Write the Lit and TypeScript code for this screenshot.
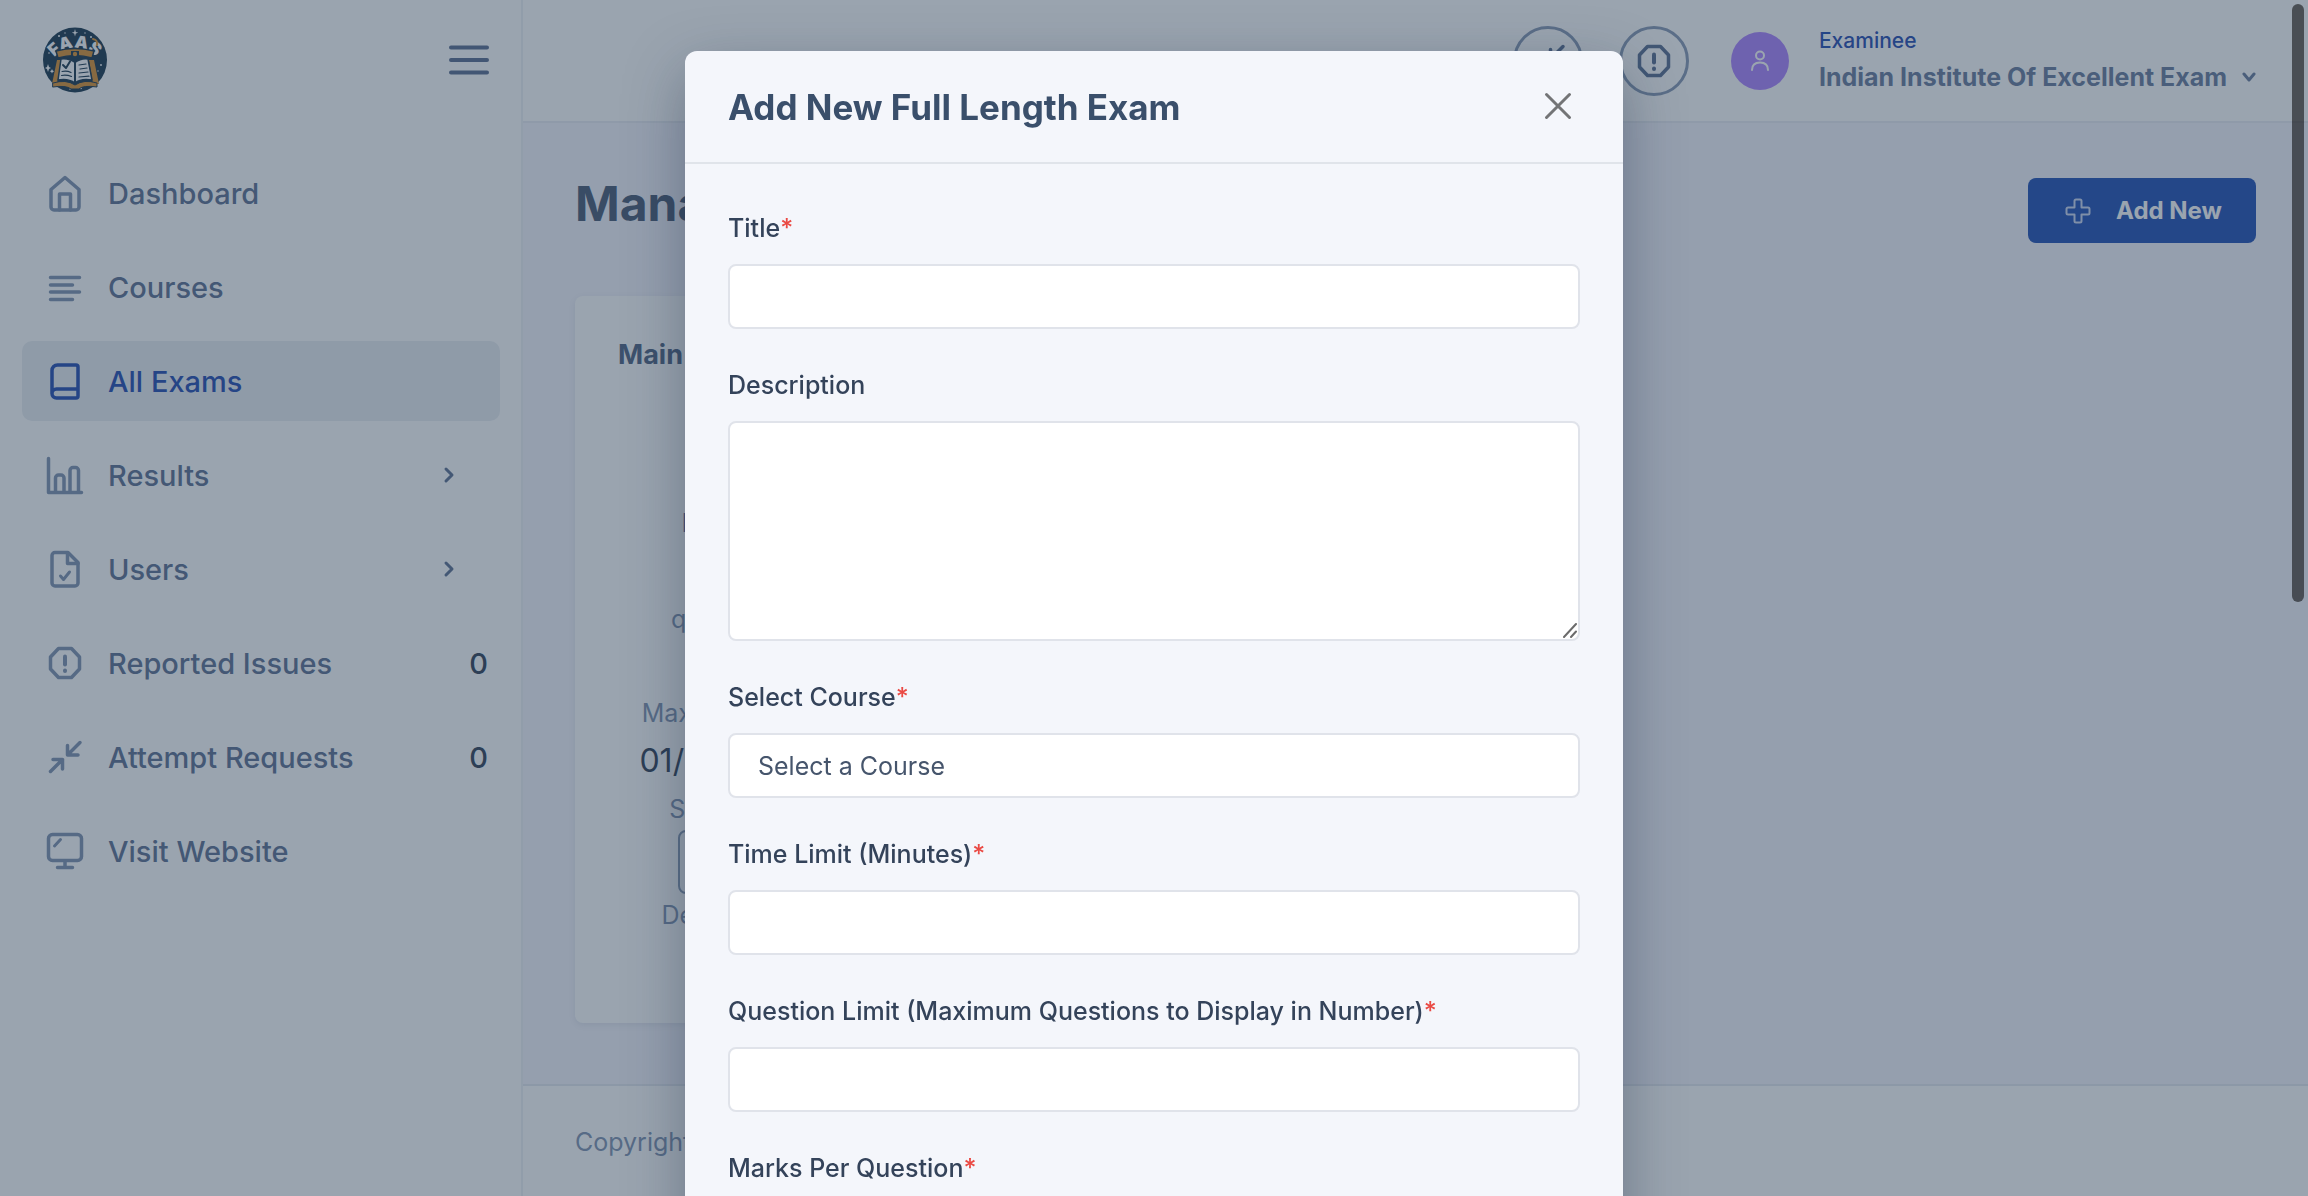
import { LitElement, html, css, svg, TemplateResult } from "lit";
import { customElement } from "lit/decorators.js";
import { classMap } from "lit/directives/class-map.js";

const icon = (body: TemplateResult) => html`<svg class="icon" viewBox="0 0 40 40" aria-hidden="true">${body}</svg>`;

const octagon = svg`<path d="M13.5 5.5h13l8 8.500v12l-8 8.500h-13l-8-8.500v-12z"/><path d="M20 13.500v8" stroke-width="4"/><path d="M20 27.500v.5" stroke-width="4"/>`;
const inward = svg`<path d="M35 5.500L23 17.500M22.500 8.500v9.500h10.500"/><path d="M5.500 34.500l12-12M8 22.500h9.500v9.500"/>`;

const icons: Record<string, TemplateResult> = {
  home: svg`<path d="M20 4.500L6 16.500v17.500a3 3 0 0 0 3 3h22a3 3 0 0 0 3-3V16.500z"/><path d="M14.500 37V21h11v16"/>`,
  lines: svg`<path d="M5.500 10.500h29M5.500 18h22M5.500 25h29M5.500 32.500h22"/>`,
  book: svg`<path d="M33 28H11.500a4.500 4.500 0 0 0 0 9H31a2 2 0 0 0 2-2V6a2 2 0 0 0-2-2H12.500A5.500 5.500 0 0 0 7 9.500v23"/>`,
  chart: svg`<path d="M3.500 3.500V37.500H36.500"/><path d="M10.500 37V23a3 3 0 0 1 3-3h2.500a3 3 0 0 1 3 3v14"/><path d="M25 37V15.500a3 3 0 0 1 3-3h2.500a3 3 0 0 1 3 3V37"/>`,
  file: svg`<path d="M10 3.500h13l10 10V34a3 3 0 0 1-3 3H10a3 3 0 0 1-3-3V6.500a3 3 0 0 1 3-3z"/><path d="M22.500 4v10.500H33"/><path d="M15.500 27l3 3.500 6-7.500" stroke-width="3"/>`,
  octagon,
  inward,
  monitor: svg`<rect x="3.500" y="3.500" width="33" height="26" rx="4"/><path d="M20 30v6M12.500 36.500h15"/><path d="M9.500 15l6-6.500" stroke-width="3"/>`,
};

interface NavItem { label: string; icon: string; active?: boolean; arrow?: boolean; count?: number }
const nav: NavItem[] = [
  { label: "Dashboard", icon: "home" },
  { label: "Courses", icon: "lines" },
  { label: "All Exams", icon: "book", active: true },
  { label: "Results", icon: "chart", arrow: true },
  { label: "Users", icon: "file", arrow: true },
  { label: "Reported Issues", icon: "octagon", count: 0 },
  { label: "Attempt Requests", icon: "inward", count: 0 },
  { label: "Visit Website", icon: "monitor" },
];

interface Field { id: string; label: string; kind: "text" | "area" | "select"; required?: boolean }
const fields: Field[] = [
  { id: "title", label: "Title", kind: "text", required: true },
  { id: "description", label: "Description", kind: "area" },
  { id: "course", label: "Select Course", kind: "select", required: true },
  { id: "time", label: "Time Limit (Minutes)", kind: "text", required: true },
  { id: "limit", label: "Question Limit (Maximum Questions to Display in Number)", kind: "text", required: true },
  { id: "marks", label: "Marks Per Question", kind: "text", required: true },
];

const base = css`
  * { box-sizing: border-box; }
  button, input, select, textarea { font: inherit; color: inherit; margin: 0; }
  button { border: 0; background: none; padding: 0; cursor: pointer; }
  a { color: inherit; text-decoration: none; }
  svg { display: block; flex: none; fill: none; stroke: currentColor; stroke-width: 3.5; stroke-linecap: round; stroke-linejoin: round; }
  .icon { width: 40px; height: 40px; }
`;

@customElement("side-nav")
export class SideNav extends LitElement {
  static styles = [base, css`
    :host { display: block; background: #fff; border-right: 2px solid #edf0f5; padding: 0 21px 0 22px; }
    .top { display: flex; align-items: center; justify-content: space-between; height: 119px; padding: 0 10px 0 21px; }
    .logo { width: 64px; height: 66px; stroke: none; overflow: visible; }
    .logo text { font: 900 17px Inter, sans-serif; fill: #fff; }
    .menu { color: #4f6388; }
    .menu svg { width: 42px; height: 36px; stroke-width: 4; }
    .list { display: flex; flex-direction: column; gap: 14px; margin: 34px 0 0; padding: 0; list-style: none; }
    .item { display: flex; align-items: center; gap: 23px; height: 80px; padding: 0 12px 0 23px; border-radius: 10px; color: #52668a; font-size: 29px; font-weight: 500; }
    .item .icon { color: #768baa; }
    .active, .item.active .icon { color: #1440ac; }
    .active { background: #e9edf1; }
    .label { flex: 1; }
    .arrow { width: 16px; height: 20px; margin-right: 31px; stroke-width: 3; }
    .count { color: #24344c; }
  `];
  render() {
    return html`
      <div class="top">
        <a href="#" aria-label="Home">
          <svg class="logo" viewBox="0 0 64 66">
            <ellipse cx="32" cy="33" rx="32" ry="32.500" fill="#0b2a42"/>
            <path d="M32 2l.8 3 2.500.8-2.500.8-.8 3-.8-3-2.500-.8 2.500-.8zM5 37l1 3 2 1-2 1-1 3-1-3-2-1 2-1zM9 42l.7 1.500 1.500.7-1.500.7L9 46.500l-.7-1.600-1.500-.7 1.500-.7z" fill="#fff"/>
            <g fill="#fff"><circle cx="16" cy="9" r="1"/><circle cx="22" cy="6" r=".7"/><circle cx="48" cy="10" r="1"/><circle cx="42" cy="6" r=".7"/><circle cx="6" cy="26" r=".8"/><circle cx="58" cy="38" r=".9"/><circle cx="55" cy="44" r=".7"/><circle cx="27" cy="62" r=".8"/><circle cx="38" cy="61.500" r=".8"/></g>
            <path id="arc" d="M8 35C15 24 23 21 32 21S49 24 56 35"/>
            <text text-anchor="middle"><textPath href="#arc" startOffset="50%">FAAS</textPath></text>
            <path d="M50 12q5 1 4 6" stroke="#d98b24" stroke-width="2"/>
            <path d="M15 31l-2-7q19-5 38 0l-2 7q-17-5-34 0z" fill="#d98b24" stroke="#0b2a42" stroke-width="1.500"/>
            <path d="M28 24h8v6l-4 6-4-6z" fill="#0b2a42"/><circle cx="32" cy="27" r="2.200" fill="#d98b24"/>
            <path d="M14 33h4l-4 24h-5zM46 33h5l5 24h-6z" fill="#d98b24"/>
            <path d="M10 56q13-4 22 2 9-6 22-2v4q-14-2-18 2h-8q-5-4-18-2z" fill="#d98b24" stroke="#0b2a42" stroke-width="1"/>
            <path d="M18 32q8-1 14 3.500Q38 31 45 32l4 21q-11-2-17 3-7-5-17-3z" fill="#fff" stroke="#0b2a42" stroke-width="1.500"/>
            <g stroke="#0b2a42" fill="none"><path d="M32 35v21" stroke-width="2"/><path d="M20 38l3 3 4-6.500" stroke-width="2"/><path d="M19 44.500q5-1 9 1M18.500 48.500q5-1 10 1M36 38l7-1M37 42l7-1M36 46l9-1M36 50l10-.8" stroke-width="1.200"/></g>
          </svg>
        </a>
        <button class="menu" aria-label="Toggle menu"><svg viewBox="0 0 42 36"><path d="M3 5.500h36M3 18h36M3 30.500h36"/></svg></button>
      </div>
      <ul class="list">
        ${nav.map(n => html`<li><a href="#" class=${classMap({ item: true, active: !!n.active })}>
          ${icon(icons[n.icon])}<span class="label">${n.label}</span>
          ${n.arrow ? html`<svg class="arrow" viewBox="0 0 16 20"><path d="M5 4l6 6-6 6"/></svg>` : ""}
          ${n.count !== undefined ? html`<span class="count">${n.count}</span>` : ""}
        </a></li>`)}
      </ul>`;
  }
}

@customElement("exam-dialog")
export class ExamDialog extends LitElement {
  static styles = [base, css`
    :host { position: fixed; inset: 0; z-index: 10; overflow-y: auto; scrollbar-width: none; background: rgba(54, 73, 96, 0.5); padding: 51px 24px; }
    .panel { max-width: 938px; margin: 0 auto; background: #f4f6fb; border-radius: 12px; box-shadow: 0 20px 60px rgba(20, 35, 60, 0.35); color: #34435a; }
    .head { display: flex; align-items: center; justify-content: space-between; height: 113px; padding: 0 43px; border-bottom: 2px solid #e0e4ea; }
    h2 { margin: 0; font-size: 35px; font-weight: 700; color: #3a4f6b; }
    .close { color: #737476; }
    .close svg { width: 44px; height: 44px; stroke-width: 3; }
    form { display: flex; flex-direction: column; gap: 36px; padding: 44px 43px; }
    .field { display: flex; flex-direction: column; gap: 16px; }
    label { font-size: 25px; line-height: 40px; font-weight: 500; }
    .req { color: #ea4a44; }
    .control { display: block; width: 100%; height: 65px; padding: 0 28px; border: 2px solid #e0e3ea; border-radius: 8px; background: #fff; font-size: 25px; outline: none; appearance: none; }
    .select { color: #46556c; }
    .wrap { position: relative; }
    .area { height: 220px; padding: 16px 28px; resize: vertical; }
    .area::-webkit-resizer { display: none; }
    .grip { position: absolute; right: 3px; bottom: 3px; width: 14px; height: 15px; stroke: #6b6b6b; stroke-width: 2; pointer-events: none; }
    .thumb { position: fixed; top: 4px; right: 4px; width: 12px; height: 598px; border-radius: 6px; background: rgba(0, 0, 0, 0.52); }
  `];
  private control(f: Field) {
    if (f.kind === "area") {
      return html`<div class="wrap"><textarea class="control area" id=${f.id}></textarea><svg class="grip" viewBox="0 0 14 15"><path d="M1 14L13 1M8 14l5-5.500"/></svg></div>`;
    }
    if (f.kind === "select") {
      return html`<select class="control select" id=${f.id}><option>Select a Course</option></select>`;
    }
    return html`<input class="control" type="text" id=${f.id}>`;
  }
  render() {
    return html`
      <section class="panel" role="dialog" aria-modal="true" aria-labelledby="heading">
        <header class="head">
          <h2 id="heading">Add New Full Length Exam</h2>
          <button class="close" aria-label="Close"><svg viewBox="0 0 44 44"><path d="M10.500 9.500l23 23M33.500 9.500l-23 23"/></svg></button>
        </header>
        <form>
          ${fields.map(f => html`<div class="field">
            <label for=${f.id}>${f.label}${f.required ? html`<span class="req">*</span>` : ""}</label>
            ${this.control(f)}
          </div>`)}
        </form>
      </section>
      <div class="thumb"></div>`;
  }
}

@customElement("app-root")
export class AppRoot extends LitElement {
  static styles = [base, css`
    :host { display: grid; grid-template-columns: 523px minmax(0, 1fr); min-height: 100vh; font-family: Inter, "Liberation Sans", sans-serif; font-size: 25px; color: #788cac; background: #f4f4fc; }
    .main { display: flex; flex-direction: column; }
    .bar { display: flex; align-items: center; justify-content: flex-end; gap: 36px; height: 123px; padding: 0 52px; background: #fff; border-bottom: 2px solid #e8ebf2; }
    .round { display: grid; place-items: center; width: 70px; height: 70px; border: 3px solid #8093b0; border-radius: 50%; color: #4f658a; }
    .avatar { display: grid; place-items: center; width: 58px; height: 58px; margin-left: 6px; border-radius: 50%; background: #a77bff; color: #fff; }
    .avatar svg { width: 24px; height: 28px; stroke-width: 2; }
    .account { display: flex; flex-direction: column; margin-left: -6px; text-align: left; }
    .role { font-size: 21px; line-height: 32px; font-weight: 500; color: #1440ac; }
    .name { display: flex; align-items: center; gap: 15px; line-height: 40px; font-weight: 700; color: #5f7396; }
    .name svg { width: 14px; height: 12px; stroke-width: 3; }
    .content { flex: 1; padding: 50px 52px 60px; }
    .title { display: flex; align-items: flex-start; justify-content: space-between; min-height: 70px; }
    h1 { margin: 0; font-size: 48px; line-height: 62px; font-weight: 700; color: #3d4f6b; }
    .add { display: flex; align-items: center; gap: 25px; height: 65px; margin-top: 5px; padding: 0 34px 0 37px; border-radius: 8px; background: #1244b0; color: #fff; font-size: 24px; font-weight: 700; }
    .add svg { width: 26px; height: 26px; stroke: #c8d4f0; stroke-width: 2; }
    .cards { display: grid; grid-template-columns: repeat(3, minmax(0, 1fr)); gap: 36px; margin-top: 53px; }
    .card { min-height: 727px; padding: 37px 43px; border-radius: 8px; background: #fff; box-shadow: 0 2px 6px rgba(52, 73, 94, 0.1); }
    h3 { margin: 0; font-size: 27px; line-height: 44px; font-weight: 700; color: #45597a; }
    .stats { display: flex; flex-direction: column; align-items: center; width: 172px; margin-top: 125px; line-height: 42px; white-space: nowrap; }
    .code { color: #5c5f96; margin-bottom: 54px; }
    .unit { margin-bottom: 52px; }
    .date { font-size: 32px; line-height: 54px; color: #24344c; }
    .pick { width: 52px; height: 64px; border: 2px solid #8093b0; border-radius: 8px; background: #f5f7fb; appearance: none; }
    .foot { height: 112px; padding: 36px 52px; background: #fff; border-top: 2px solid #e3e7ef; line-height: 40px; }
  `];
  render() {
    return html`
      <side-nav></side-nav>
      <div class="main">
        <header class="bar">
          <button class="round" aria-label="Attempt requests">${icon(inward)}</button>
          <button class="round" aria-label="Reported issues">${icon(octagon)}</button>
          <span class="avatar"><svg viewBox="0 0 24 28"><circle cx="12" cy="8.500" r="4"/><path d="M4 23q0-7.500 8-7.500t8 7.500"/></svg></span>
          <button class="account">
            <span class="role">Examinee</span>
            <span class="name">Indian Institute Of Excellent Exam <svg viewBox="0 0 14 12"><path d="M2 3l5 6 5-6"/></svg></span>
          </button>
        </header>
        <main class="content">
          <div class="title">
            <h1>Manage</h1>
            <button class="add"><svg viewBox="0 0 26 26"><path d="M11 1.500h4a1.500 1.500 0 0 1 1.500 1.500v6.500H23a1.500 1.500 0 0 1 1.500 1.500v4a1.500 1.500 0 0 1-1.500 1.500h-6.500V23a1.500 1.500 0 0 1-1.500 1.500h-4A1.500 1.500 0 0 1 9.500 23v-6.500H3A1.500 1.500 0 0 1 1.500 15v-4A1.500 1.500 0 0 1 3 9.500h6.500V3A1.500 1.500 0 0 1 11 1.500z"/></svg>Add New</button>
          </div>
          <div class="cards">
            <article class="card">
              <h3>Main</h3>
              <div class="stats">
                <span class="code">Ren</span>
                <span class="unit">quest</span>
                <span>Max Mark:</span>
                <span class="date">01/01/24</span>
                <label for="status">Starts</label>
                <select class="pick" id="status"></select>
                <span>Default</span>
              </div>
            </article>
          </div>
        </main>
        <footer class="foot">Copyright</footer>
      </div>
      <exam-dialog></exam-dialog>`;
  }
}
